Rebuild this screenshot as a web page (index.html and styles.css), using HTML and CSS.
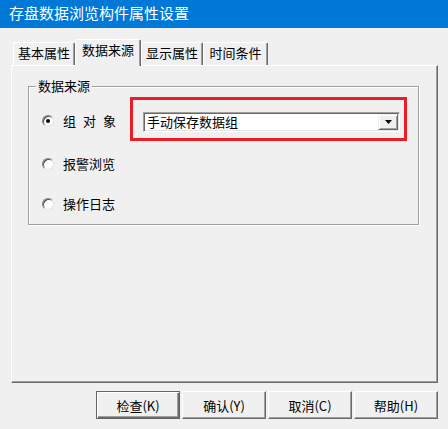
FILE: index.html
```html
<!DOCTYPE html>
<html lang="zh-CN">
<head>
<meta charset="utf-8">
<title>存盘数据浏览构件属性设置</title>
<link rel="stylesheet" href="styles.css">
</head>
<body>
<div class="window">
  <div class="titlebar">存盘数据浏览构件属性设置</div>
  <div class="tabs">
    <div class="tab t1">基本属性</div>
    <div class="tab t2 active">数据来源</div>
    <div class="tab t3">显示属性</div>
    <div class="tab t4">时间条件</div>
  </div>
  <div class="panel">
    <fieldset class="group">
      <legend>数据来源</legend>
      <div class="row row1">
        <span class="radio checked"></span>
        <span class="label spaced">组对象</span>
        <div class="highlight">
          <div class="combo">
            <span class="combo-text">手动保存数据组</span>
            <span class="combo-btn"><svg width="7" height="4" viewBox="0 0 7 4"><polygon points="0,0 7,0 3.5,4" fill="#000"/></svg></span>
          </div>
        </div>
      </div>
      <div class="row row2">
        <span class="radio"></span>
        <span class="label">报警浏览</span>
      </div>
      <div class="row row3">
        <span class="radio"></span>
        <span class="label">操作日志</span>
      </div>
    </fieldset>
  </div>
  <div class="buttons">
    <button class="btn default">检查(K)</button>
    <button class="btn">确认(Y)</button>
    <button class="btn">取消(C)</button>
    <button class="btn">帮助(H)</button>
  </div>
</div>
</body>
</html>
```
FILE: styles.css
```css
html, body {
  margin: 0;
  padding: 0;
}
body {
  background: #f0f0f0;
  font-family: "Noto Sans CJK SC", "Liberation Sans", sans-serif;
  font-size: 13px;
  color: #000;
  width: 448px;
  height: 429px;
  overflow: hidden;
}
.titlebar {
  height: 28px;
  box-sizing: border-box;
  background: #0078d7;
  color: #fff;
  font-size: 15px;
  line-height: 26px;
  padding-left: 9px;
}
.tabs {
  display: flex;
  align-items: flex-end;
  margin: 11px 0 -1px 13px;
  height: 27px;
  position: relative;
  z-index: 1;
}
.tab {
  box-sizing: border-box;
  height: 23px;
  width: 62px;
  margin-bottom: 1px;
  border: 1px solid;
  border-bottom: none;
  border-color: #fff #696969 #696969 #fff;
  border-radius: 2px 2px 0 0;
  box-shadow: inset -1px 0 0 #a0a0a0;
  background: #f0f0f0;
  text-align: center;
  line-height: 19px;
}
.tab.t4 { width: 65px; }
.tab.active {
  width: 66px;
  height: 27px;
  margin-bottom: 0;
  line-height: 20px;
}
.panel {
  box-sizing: border-box;
  margin-left: 11px;
  width: 427px;
  height: 318px;
  border: 1px solid;
  border-color: #fff #696969 #696969 #fff;
  box-shadow: inset -1px -1px 0 #a0a0a0;
  padding: 13px 0 0 16px;
}
.group {
  box-sizing: border-box;
  width: 391px;
  margin: 0;
  padding: 0 0 10px 0;
  border: 1px solid #a0a0a0;
  box-shadow: inset 1px 1px 0 #fff, 1px 1px 0 #fff;
}
.group legend {
  margin-left: 7px;
  padding: 0 2px;
  line-height: 14px;
  background: #f0f0f0;
}
.row {
  display: flex;
  align-items: center;
  padding-left: 13px;
}
.row1 {
  margin-top: 4px;
  height: 44px;
}
.row1 .radio, .row1 .label {
  margin-top: 4px;
}
.row2 {
  margin-top: 13px;
  height: 20px;
}
.row3 {
  margin-top: 20px;
  height: 20px;
}
.radio {
  flex: none;
  box-sizing: border-box;
  width: 12px;
  height: 12px;
  border-radius: 50%;
  background: #fff;
  border: 1px solid;
  border-color: #808080 #e3e3e3 #e3e3e3 #808080;
  box-shadow: inset 1px 1px 0 #505050;
  display: flex;
  align-items: center;
  justify-content: center;
}
.radio.checked::after {
  content: "";
  width: 4px;
  height: 4px;
  border-radius: 50%;
  background: #000;
}
.label {
  margin-left: 9px;
  line-height: 14px;
  white-space: nowrap;
}
.label.spaced {
  letter-spacing: 7px;
}
.highlight {
  flex: none;
  margin-left: 7px;
  border: 3px solid #ed1c24;
  padding: 12px 4px 6px 10px;
}
.combo {
  box-sizing: border-box;
  width: 257px;
  height: 20px;
  display: flex;
  align-items: center;
  background: #fff;
  border: 1px solid;
  border-color: #a0a0a0 #fff #fff #a0a0a0;
  box-shadow: inset 1px 1px 0 #696969, inset -1px -1px 0 #e3e3e3;
  padding: 1px 1px 1px 3px;
}
.combo-text {
  flex: 1;
  line-height: 14px;
  white-space: nowrap;
}
.combo-btn {
  flex: none;
  box-sizing: border-box;
  width: 20px;
  height: 16px;
  background: #f0f0f0;
  border: 1px solid;
  border-color: #f0f0f0 #696969 #696969 #f0f0f0;
  box-shadow: inset 1px 1px 0 #fff, inset -1px -1px 0 #a0a0a0;
  display: flex;
  align-items: center;
  justify-content: center;
}
.combo-btn svg {
  display: block;
}
.buttons {
  display: flex;
  justify-content: flex-end;
  gap: 2px;
  width: 438px;
  margin-top: 8px;
}
.btn {
  box-sizing: border-box;
  width: 84px;
  height: 28px;
  margin: 0;
  padding: 0;
  font: inherit;
  color: #000;
  background: #f0f0f0;
  border: 1px solid;
  border-color: #fff #696969 #696969 #fff;
  box-shadow: inset -1px -1px 0 #a0a0a0, inset 1px 1px 0 #f0f0f0;
  display: flex;
  align-items: center;
  justify-content: center;
}
.btn.default {
  border: 1px solid #646464;
  box-shadow: inset 1px 1px 0 #fff, inset -1px -1px 0 #696969, inset -2px -2px 0 #a0a0a0;
}
```
